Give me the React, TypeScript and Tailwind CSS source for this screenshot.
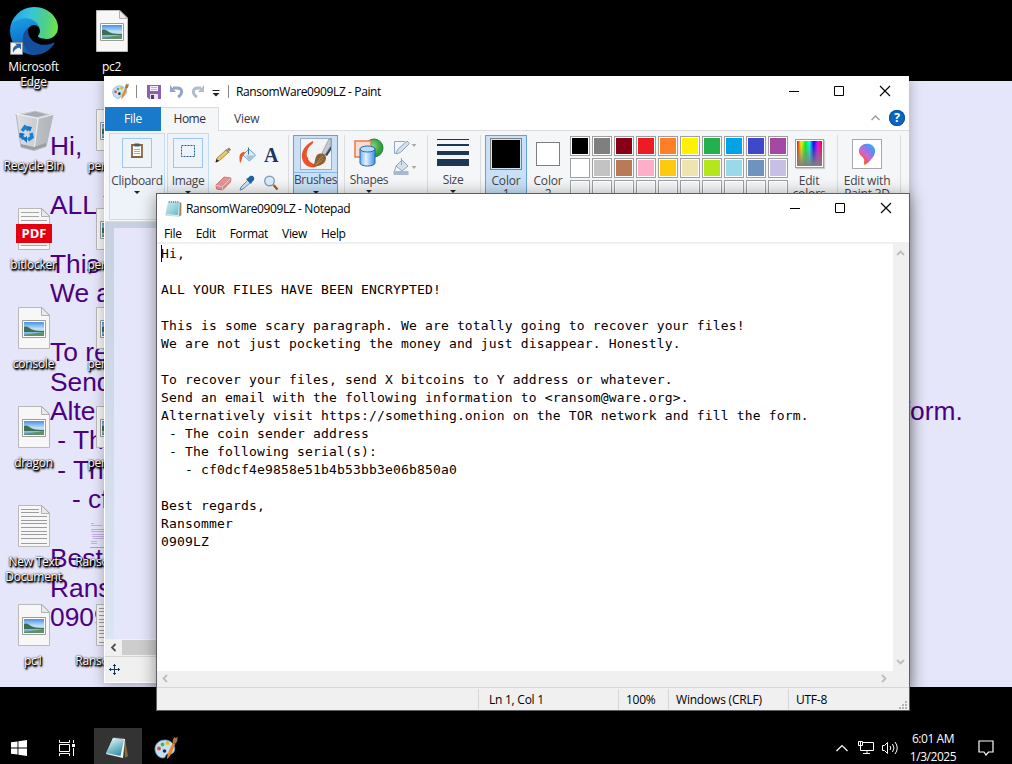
import React from "react";

const note = [
  "Hi,",
  "",
  "ALL YOUR FILES HAVE BEEN ENCRYPTED!",
  "",
  "This is some scary paragraph. We are totally going to recover your files!",
  "We are not just pocketing the money and just disappear. Honestly.",
  "",
  "To recover your files, send X bitcoins to Y address or whatever.",
  "Send an email with the following information to <ransom@ware.org>.",
  "Alternatively visit https://something.onion on the TOR network and fill the form.",
  " - The coin sender address",
  " - The following serial(s):",
  "   - cf0dcf4e9858e51b4b53bb3e06b850a0",
  "",
  "Best regards,",
  "Ransommer",
  "0909LZ",
].join("\n");

/* ---------- Desktop icons ---------- */

function EdgeIcon() {
  return (
    <svg width="48" height="48" viewBox="0 0 256 256">
      <defs>
        <linearGradient id="eTop" x1="0" y1="0.3" x2="1" y2="0.4">
          <stop offset="0" stopColor="#259fe2" />
          <stop offset="0.4" stopColor="#36c3de" />
          <stop offset="0.75" stopColor="#4fcf8a" />
          <stop offset="1" stopColor="#71e24c" />
        </linearGradient>
        <linearGradient id="eLeft" x1="0.3" y1="0" x2="0.5" y2="1">
          <stop offset="0" stopColor="#1ca0e4" />
          <stop offset="0.5" stopColor="#0f7ed4" />
          <stop offset="1" stopColor="#0f59a4" />
        </linearGradient>
      </defs>
      <g transform="translate(-4.63 -4.92)">
        <path d="M235.68 195.46a93.73 93.73 0 0 1-10.54 4.71 101.87 101.87 0 0 1-35.900 6.460c-47.320 0-88.540-32.550-88.540-74.320A31.480 31.480 0 0 1 117.130 105c-42.800 1.800-53.800 46.400-53.800 72.530 0 73.880 68.090 81.370 82.760 81.370 7.910 0 19.840-2.300 27-4.560l1.310-.44a128.340 128.340 0 0 0 66.600-52.800 4 4 0 0 0-5.320-5.640z" fill="#134f9c" />
        <path d="M110.340 246.340A79.200 79.200 0 0 1 87.600 225a80.720 80.720 0 0 1 29.530-120c3.120-1.470 8.450-4.130 15.540-4a32.350 32.350 0 0 1 25.690 13 31.880 31.880 0 0 1 6.360 18.660c0-.21 24.460-79.600-80-79.600-43.900 0-80 41.660-80 78.210a130.150 130.150 0 0 0 12.110 56 128 128 0 0 0 156.380 67.110 75.550 75.550 0 0 1-62.780-8z" fill="url(#eLeft)" />
        <path d="M156.940 153.780c-.81 1.050-3.300 2.500-3.300 5.660 0 2.610 1.700 5.120 4.720 7.230 14.380 10 41.490 8.680 41.560 8.680a59.560 59.560 0 0 0 30.270-8.350 61.380 61.380 0 0 0 30.430-52.880c.26-22.410-8-37.310-11.340-43.910C228.090 28.760 182.350 4.920 132.610 4.920a128 128 0 0 0-128 126.200c.48-36.540 36.800-66.050 80-66.050 3.500 0 23.460.34 42 10.070 16.340 8.580 24.900 18.940 30.850 29.210 6.180 10.670 7.280 24.150 7.280 29.520s-2.740 13.330-7.800 19.910z" fill="url(#eTop)" />
      </g>
      <path d="M3 189h64v64H3z" fill="#f5f5f5" stroke="#8b8b8b" strokeWidth="5" />
      <path d="M17 244c-6-24 4-36 20-40l-10-10h32v32l-10-10c-14 4-24 10-32 28z" fill="#2f62a8" />
    </svg>
  );
}

function RecycleBin() {
  return (
    <svg width="48" height="48" viewBox="0 0 48 48">
      <defs>
        <linearGradient id="bin" x1="0" x2="1">
          <stop offset="0" stopColor="#dfe0e3" />
          <stop offset="0.6" stopColor="#c9cbcf" />
          <stop offset="1" stopColor="#aeb0b6" />
        </linearGradient>
      </defs>
      <path d="M6 8l5 33 13 3.500 12-4 7-32-18-4z" fill="url(#bin)" stroke="#b4b6ba" />
      <path d="M6 8l19-4 18 4.500-15 4z" fill="#c9ccd2" stroke="#f2f3f6" />
      <path d="M13 8.500l12-3 12 3-10 2.500z" fill="#a6aab3" />
      <path d="M28 13l-4 31 12-4 6-30z" fill="#b3b5bb" opacity="0.600" />
      <path d="M28 13l-4 31" stroke="#eeeff2" strokeWidth="1.200" />
      <path d="M11 38l13 3 12-4v3l-12 4-13-3z" fill="#9c9ea0" />
      <g fill="none" stroke="#1783d8" strokeWidth="3.600">
        <path d="M12 25l3-4 4 3" />
        <path d="M21 27l1 4-4 3" />
        <path d="M14 33l-3-3 1-3" />
      </g>
      <path d="M17 20l5 1-2 5zM17 30v7l-4-4zM9 27l6 1-4 4z" fill="#0c72cc" />
    </svg>
  );
}

function Sheet({ kind }: { kind: "picture" | "text" | "pdf" }) {
  const lines = [9, 12, 16, 20, 23, 27, 31, 34, 38];
  return (
    <svg width="48" height="48" viewBox="0 0 48 48">
      <defs>
        <linearGradient id="sky" x1="0" y1="0" x2="0" y2="1">
          <stop offset="0" stopColor="#4a90e6" />
          <stop offset="0.5" stopColor="#c4e4f7" />
          <stop offset="1" stopColor="#5b93c4" />
        </linearGradient>
      </defs>
      <path d="M8.500 3.500H32l7.500 7.500V44.500H8.500z" fill="#f7f7f7" stroke="#b9b9b9" />
      <path d="M31.500 3.500v8h8z" fill="#e9e9e9" stroke="#b0b0b0" />
      {kind === "picture" && (
        <g>
          <path d="M12.500 16.500h23v17h-23z" fill="#fff" stroke="#9b9b9b" />
          <path d="M14 18h20v14H14z" fill="url(#sky)" />
          <path d="M14 23c3-1 4 0 7 2 4 2 8 2 13 2v1H14z" fill="#3d6f57" />
          <path d="M14 31c7-1 12-2 20-3v4H14z" fill="#5f9166" />
        </g>
      )}
      {kind === "text" &&
        lines.map((y, i) => <path key={y} d={i < 2 ? `M11 ${y - 1.5}h18` : `M11 ${y - 1.5}h26`} stroke="#9d9d9d" />)}
      {kind === "text" && <path d="M11 41.500h26" stroke="#9d9d9d" />}
      {kind === "pdf" && (
        <g>
          <path d="M11 7.500h18M11 11.500h18M11 15.500h26M11 40.500h26" stroke="#a5a5a5" />
          <rect x="6" y="19" width="36" height="19" fill="#e3000f" />
          <text x="24" y="33" textAnchor="middle" fontSize="13" fontWeight="700" fill="#fff" className="font-['Open_Sans',sans-serif]">
            PDF
          </text>
        </g>
      )}
    </svg>
  );
}

function Thumb() {
  return (
    <svg width="48" height="48" viewBox="0 0 48 48">
      <path d="M2 20h44v25H2z" fill="#e6e6fa" />
      <path d="M3 21.500h3M3 23.500h11M3 27.500h28M3 29.500h26M4 32.500h25M4 34.500h20M5 36.500h20M3 39.500h6M3 41.500h6" stroke="#c3b0e0" />
      <path d="M2 45.500h44" stroke="#a8a8b8" />
    </svg>
  );
}

function DeskItem({ icon, label }: { icon: React.ReactNode; label: string }) {
  return (
    <div className="flex h-[99px] w-[78px] flex-col items-center">
      {icon}
      <div className="mr-px mt-[4px] w-[76px] whitespace-pre text-center text-[12px] leading-[15px] tracking-[-0.25px] text-white [text-shadow:1px_1px_1px_#000,1px_1px_2px_#000,1px_2px_2px_#000,0_0_2px_#000]">
        {label}
      </div>
    </div>
  );
}

/* ---------- Small shared drawings ---------- */

function WindowButtons() {
  return (
    <svg width="105" height="12" viewBox="0 0 105 12" fill="none" stroke="#000" className="shrink-0">
      <path d="M0 6.500h10" />
      <path d="M45.500 1.500h9v9h-9z" />
      <path d="M91 1l10 10M101 1L91 11" strokeWidth="1.100" />
    </svg>
  );
}

function Palette({ size }: { size: number }) {
  return (
    <svg width={size} height={size} viewBox="0 0 24 24">
      <path d="M11 4C5 4 1 8 1 13c0 5 4 9 8 9 3 0 2-3 4-4 2-1 3 1 6-1 5-5-1-13-8-13z" fill="#c3e1f4" stroke="#6ba0c4" strokeWidth="0.800" />
      <circle cx="5" cy="12.500" r="1.900" fill="#e44b3c" />
      <circle cx="8.500" cy="8.500" r="1.900" fill="#4cb24a" />
      <circle cx="13.500" cy="7" r="2" fill="#f3b01d" />
      <circle cx="10.500" cy="15" r="1.800" fill="#1f2b38" />
      <path d="M13 23c0-5 3-11 6-16l2 1c-2 6-4 12-8 15z" fill="#e98527" />
      <path d="M18.500 7c0-3 1-5 2-6l1 1 2-1c0 3 0 5-2.500 7z" fill="#a87545" />
    </svg>
  );
}

function PadIcon({ size }: { size: number }) {
  return (
    <svg width={size} height={size} viewBox="0 0 24 24">
      <defs>
        <linearGradient id="pad" x1="0" y1="0" x2="1" y2="1">
          <stop offset="0" stopColor="#c9e9ef" />
          <stop offset="0.500" stopColor="#9bd6e0" />
          <stop offset="1" stopColor="#66b4c4" />
        </linearGradient>
      </defs>
      <path d="M20 3l3 1v18l-4 1z" fill="#9c8458" />
      <path d="M5 3h16l-1 20-19-1.500z" fill="#f4f6f6" stroke="#7fa6ae" strokeWidth="0.600" />
      <path d="M5 3.500h15L18.500 21 1 20z" fill="url(#pad)" />
      <path d="M6 1.500v2.500M9 1.500v2.500M12 1.500v2.500M15 1.500v2.500M18 1.500v2.500" stroke="#555" />
    </svg>
  );
}

function TaskPad() {
  return (
    <svg width="24" height="24" viewBox="0 0 24 24">
      <defs>
        <linearGradient id="tpad" x1="0.300" y1="0" x2="0.800" y2="1">
          <stop offset="0" stopColor="#e4f3f5" />
          <stop offset="0.500" stopColor="#7dbfcc" />
          <stop offset="1" stopColor="#2f8ba0" />
        </linearGradient>
      </defs>
      <path d="M19 3l1 .5L23 20l-3 2z" fill="#8a6b35" />
      <path d="M8 2l12 1-2 19L1 18z" fill="#eef3f3" />
      <path d="M8 2l11 1.500L15.500 20 1 17z" fill="url(#tpad)" />
      <path d="M8.500 1.500l10.500 1" stroke="#777" strokeDasharray="1 1" />
    </svg>
  );
}

function Down() {
  return (
    <svg width="6" height="3" viewBox="0 0 6 3">
      <path d="M0 0h6L3 3z" fill="#222" />
    </svg>
  );
}

function Sep() {
  return <div className="mt-[2px] h-[84px] w-px shrink-0 bg-[#dcdddf]" />;
}

/* ---------- Paint ---------- */

function ToolIcons() {
  return (
    <div className="ml-[2px] mt-[8px] grid h-[56px] w-[72px] shrink-0 grid-cols-3 grid-rows-2 place-items-center">
      <svg width="16" height="16" viewBox="0 0 16 16">
        <path d="M1 15l1-4 9-8 2.500 2.500-9 8z" fill="#edc867" stroke="#8d6b22" strokeWidth="0.700" />
        <path d="M12.500 2l1.500-1 1.500 1.500-1 1.500z" fill="#d6606a" stroke="#a84650" strokeWidth="0.600" />
        <path d="M11 2.500l3 3" stroke="#5d9a68" strokeWidth="1.500" />
        <path d="M0.500 15.500L1.500 12l2.500 2z" fill="#222" />
      </svg>
      <svg width="17" height="17" viewBox="0 0 17 17">
        <path d="M4 8l6-6 6.500 6-6 6z" fill="#dcebf7" stroke="#6a99c2" />
        <path d="M7 8.500h8.500l-5 5z" fill="#9cc4e2" />
        <path d="M9.500 0.500v7" stroke="#3c6f9e" />
        <path d="M6 5C1 5 -0.500 8 1 16c2-1 1.500-6 4-9z" fill="#ea5a2d" />
      </svg>
      <span className="font-['Liberation_Serif',serif] text-[20px] font-bold leading-none text-[#1d3557]">A</span>
      <svg width="17" height="15" viewBox="0 0 17 15">
        <path d="M1 9l8-8 7 1-.5 4-8 8L1.500 13z" fill="#e99393" stroke="#b96060" strokeWidth="0.700" />
        <path d="M1 9.500l6.500 1 8-8M7.500 10.500V14" fill="none" stroke="#f8cccc" />
      </svg>
      <svg width="16" height="16" viewBox="0 0 16 16">
        <path d="M8.500 5.500L2 12l-1 3 3-1 7-6z" fill="#cce6f5" stroke="#3f7fae" strokeWidth="0.800" />
        <path d="M7 4l5 5 1-2 2-2c1-3-1-5-4-4L9 3z" fill="#1e61a5" />
      </svg>
      <svg width="16" height="16" viewBox="0 0 16 16">
        <circle cx="6.500" cy="6" r="4.800" fill="#dcedfa" stroke="#8b9fb4" strokeWidth="1.400" />
        <path d="M10.500 10l4 4.500" stroke="#9a6538" strokeWidth="2.500" />
      </svg>
    </div>
  );
}

function BrushIcon() {
  return (
    <svg width="32" height="32" viewBox="0 0 32 32" className="shrink-0">
      <rect x="0.500" y="0.500" width="31" height="31" fill="#f2f3f5" stroke="#9caec0" />
      <path d="M13 3C5 7 1 13 2 20c1 5 4 8 8 9 4 1 7 0 9-3-5 1-9-1-11-5 1-1 0-2-1-2-1-5 1-9 3-11 2-2 4-3 3-5z" fill="#e6552c" />
      <path d="M22 15l7-14h2v6l-6 10z" fill="#c3cad2" stroke="#7d8792" strokeWidth="0.600" />
      <path d="M25 17l6-9v4l-4 6z" fill="#3c475b" />
      <path d="M12 28c4-2 2-7 5-11 4-3 9-1 9 3 0 6-7 9-14 8z" fill="#8d6136" />
      <path d="M17 26c2-4 3-6 6-8M15 27c3-1 6-4 8-6" fill="none" stroke="#b98c55" />
    </svg>
  );
}

function ShapesIcon() {
  return (
    <svg width="30" height="29" viewBox="0 0 30 29">
      <defs>
        <linearGradient id="cyl" x1="0" x2="1">
          <stop offset="0" stopColor="#6cb1ec" />
          <stop offset="0.400" stopColor="#e4f3ff" />
          <stop offset="1" stopColor="#3d8fdf" />
        </linearGradient>
        <radialGradient id="ball" cx="0.400" cy="0.400">
          <stop offset="0" stopColor="#8bd67e" />
          <stop offset="1" stopColor="#2f9e3a" />
        </radialGradient>
      </defs>
      <circle cx="20" cy="10" r="9" fill="url(#ball)" stroke="#228332" />
      <path d="M1 3h16v16H1z" fill="#fbdccd" stroke="#ea7a4a" strokeWidth="1.500" />
      <path d="M6 11v14c0 4 15 4 15 0V11z" fill="url(#cyl)" stroke="#2268b2" />
      <ellipse cx="13.500" cy="11" rx="7.500" ry="3" fill="#b8dcf9" stroke="#2268b2" />
    </svg>
  );
}

const colors = [
  ["bg-black", "bg-[#7f7f7f]", "bg-[#880015]", "bg-[#ed1c24]", "bg-[#ff7f27]", "bg-[#fff200]", "bg-[#22b14c]", "bg-[#00a2e8]", "bg-[#3f48cc]", "bg-[#a349a4]"],
  ["bg-white", "bg-[#c3c3c3]", "bg-[#b97a57]", "bg-[#ffaec9]", "bg-[#ffc90e]", "bg-[#efe4b0]", "bg-[#b5e61d]", "bg-[#99d9ea]", "bg-[#7092be]", "bg-[#c8bfe7]"],
  Array(10).fill("bg-[#f5f6f7]"),
].flat();

function Paint() {
  return (
    <div className="absolute left-[104px] top-[76px] flex h-[607px] w-[805px] flex-col bg-white pl-px shadow-[0_2px_12px_rgba(0,0,0,0.3)]">
      <div className="flex h-[31px] shrink-0 items-center pl-[7px]">
        <Palette size={17} />
        <div className="ml-[7px] h-[13px] w-px bg-[#888]" />
        <svg width="14" height="14" viewBox="0 0 14 14" className="ml-[10px]">
          <path d="M0 0h14v14H2l-2-2z" fill="#8b62b0" />
          <path d="M3 1h8v5H3z" fill="#f4effa" />
          <path d="M3 9h8v5H3z" fill="#e7e2ee" />
          <path d="M4 10h3v4H4z" fill="#563477" />
          <path d="M4 2.500h6M4 4.500h6" stroke="#c3afd7" />
        </svg>
        <svg width="36" height="15" viewBox="0 0 36 15" className="ml-[9px]" fill="none" stroke="#93a5c8" strokeWidth="3">
          <path d="M3 4h4c6 0 6 6 1 9" />
          <path d="M0 1v7h6z" fill="#93a5c8" stroke="none" />
          <path d="M31 4h-3c-6 0-6 6-1 9" stroke="#b2bccd" />
          <path d="M34 1v7h-6z" fill="#b2bccd" stroke="none" />
        </svg>
        <svg width="8" height="7" viewBox="0 0 8 7" className="ml-[6px] mt-[3px]">
          <path d="M0.500 0.500h7" stroke="#222" />
          <path d="M0.500 3h7L4 6.500z" fill="#222" />
        </svg>
        <div className="ml-[8px] h-[13px] w-px bg-[#888]" />
        <div className="ml-[7px] text-[12px] tracking-[-0.380px]">RansomWare0909LZ - Paint</div>
        <div className="mb-px ml-auto mr-[15px] flex">
          <WindowButtons />
        </div>
      </div>

      <div className="flex h-[24px] shrink-0 text-[12px] leading-[24px] tracking-[-0.2px]">
        <div className="w-[56px] bg-[#1979ca] text-center text-white">File</div>
        <div className="w-[58px] border-r border-t border-[#dadbdc] bg-[#f5f6f7] text-center text-[#2b2b3b] leading-[22px] tracking-[-0.500px]">Home</div>
        <div className="flex grow items-center border-b border-[#dadbdc] pl-[15px]">
          <span className="text-[#3b3b4b]">View</span>
          <svg width="9" height="6" viewBox="0 0 9 6" className="ml-auto mr-[9px] mb-[2px]" fill="none" stroke="#9a9a9a" strokeWidth="1.400">
            <path d="M0.500 5l4-4 4 4" />
          </svg>
          <div className="mb-[2px] mr-[4px] flex size-[16px] items-center justify-center rounded-full bg-[#0a66c2] text-[12px] font-bold text-white ring-1 ring-inset ring-[#0c5398]">?</div>
        </div>
      </div>

      <div className="flex h-[91px] shrink-0 items-start overflow-hidden border-b border-[#d5dbe2] bg-[#f5f6f7] pl-[4px] pt-[2px] text-[12px] leading-[14px] tracking-[-0.350px] text-[#44444f]">
        <div className="flex h-[87px] w-[56px] shrink-0 flex-col items-center border border-[#c3dcf2] bg-[#edf3f8] pt-[4px]">
          <div className="flex size-[30px] shrink-0 items-center justify-center border border-[#9dc8f2]">
            <svg width="12" height="15" viewBox="0 0 12 15" className="mb-[5px]">
              <path d="M1 2h10v12H1z" fill="#fff" stroke="#8a6440" strokeWidth="1.800" />
              <path d="M3.500 0.500h5v3h-5z" fill="#555" />
              <path d="M3 6.500h6M3 8.500h6M3 10.500h6" stroke="#aaa" />
            </svg>
          </div>
          <span className="mt-[6px]">Clipboard</span>
          <span className="mt-[3px] flex"><Down /></span>
        </div>
        <div className="ml-[2px] flex h-[87px] w-[42px] shrink-0 flex-col items-center border border-[#c3dcf2] bg-[#edf3f8] pt-[4px]">
          <div className="flex size-[30px] shrink-0 items-center justify-center border border-[#9dc8f2]">
            <svg width="14" height="12" viewBox="0 0 14 12" className="mb-[4px]">
              <path d="M0.500 0.500h13v11H0.500z" fill="none" stroke="#215c92" strokeDasharray="2 1" />
            </svg>
          </div>
          <span className="mt-[6px]">Image</span>
          <span className="mt-[3px] flex"><Down /></span>
        </div>
        <ToolIcons />
        <div className="ml-[5px]"><Sep /></div>
        <div className="ml-[4px] mt-[2px] flex h-[83px] w-[45px] shrink-0 flex-col items-center border border-[#62a2e4] bg-[#c9e0f7] pt-[2px]">
          <BrushIcon />
          <div className="mt-[2px] h-px w-full shrink-0 bg-[#86b8ea]" />
          <span>Brushes</span>
          <span className="mt-[4px] flex"><Down /></span>
        </div>
        <div className="ml-[6px]"><Sep /></div>
        <div className="ml-[5px] flex w-[38px] shrink-0 flex-col items-center pt-[5px]">
          <ShapesIcon />
          <span className="mt-[6px]">Shapes</span>
          <span className="mt-[3px] flex"><Down /></span>
        </div>
        <svg width="25" height="36" viewBox="0 0 25 36" className="ml-[5px] mt-[7px] shrink-0">
          <path d="M12 1.500H1.500v12l3-1" fill="none" stroke="#8ea5c4" />
          <path d="M3 14l1.500-4.500L14 1l2.500 2.500-9 9z" fill="#d5dfea" stroke="#8fa4bd" />
          <path d="M18.500 4h5L21 7zM18.500 26h5L21 29z" fill="#aaa" />
          <path d="M3 26l6-6 6 6-6 5z" fill="#d5dfea" stroke="#8fa4bd" />
          <path d="M8.500 18v7M3.500 25l-2 6" stroke="#8fa4bd" />
          <path d="M0.500 31h15v4h-15z" fill="#a9b9ce" />
        </svg>
        <div className="ml-[9px]"><Sep /></div>
        <div className="ml-[9px] flex w-[32px] shrink-0 flex-col items-center pt-[6px]">
          <div className="h-px w-full bg-[#1c3658]" />
          <div className="mt-[4px] h-[2px] w-full bg-[#1c3658]" />
          <div className="mt-[5px] h-[4px] w-full bg-[#1c3658]" />
          <div className="mt-[4px] h-[7px] w-full bg-[#1c3658]" />
          <span className="mt-[7px]">Size</span>
          <span className="mt-[3px] flex"><Down /></span>
        </div>
        <div className="ml-[11px]"><Sep /></div>
        <div className="ml-[4px] mt-[2px] flex h-[83px] w-[42px] shrink-0 flex-col items-center border border-[#62a2e4] bg-[#c9e0f7] pt-[2px] text-center">
          <div className="size-[32px] shrink-0 border border-[#808080] bg-black shadow-[inset_0_0_0_1px_#cfe3f6]" />
          <span className="mt-[4px] leading-[13px] tracking-[-0.150px]">Color<br />1</span>
        </div>
        <div className="ml-[2px] flex w-[38px] shrink-0 flex-col items-center pt-[9px] text-center">
          <div className="size-[24px] border border-[#808080] bg-white" />
          <span className="mt-[8px] leading-[13px] tracking-[-0.150px]">Color<br />2</span>
        </div>
        <div className="ml-[3px] mt-[3px] grid shrink-0 grid-cols-10 gap-[2px]">
          {colors.map((c, i) => (
            <div key={i} className="size-[20px] border border-[#a0a0a0] bg-white p-px">
              <div className={`size-full ${c}`} />
            </div>
          ))}
        </div>
        <div className="ml-px flex w-[40px] shrink-0 flex-col items-center pt-[6px] text-center">
          <div className="size-[29px] border border-[#a0a0a0] bg-white p-px shadow-[1px_1px_1px_#ccc]">
            <div className="size-full bg-[linear-gradient(to_bottom,transparent,#808080),linear-gradient(to_right,#f00,#ff0,#0f0,#0ff,#00f,#f0f,#f00)]" />
          </div>
          <span className="mt-[6px] leading-[13px] tracking-[-0.150px]">Edit<br />colors</span>
        </div>
        <div className="ml-[8px]"><Sep /></div>
        <div className="ml-[4px] flex w-[50px] shrink-0 flex-col items-center pt-[6px] text-center">
          <div className="flex size-[30px] items-center justify-center border border-[#a8a8a8] bg-white">
            <svg width="18" height="25" viewBox="0 0 20 26">
              <defs>
                <linearGradient id="p3" x1="1" y1="0" x2="0.200" y2="1">
                  <stop offset="0" stopColor="#18d0f0" />
                  <stop offset="0.350" stopColor="#6c7ff0" />
                  <stop offset="0.600" stopColor="#d565cf" />
                  <stop offset="0.800" stopColor="#ef5350" />
                  <stop offset="1" stopColor="#ffb900" />
                </linearGradient>
              </defs>
              <path d="M10 1c-5 0-9 4-9 8 0 5 5 6 6 10 0 2-1 3 0 6 6-4 12-10 12-16 0-5-4-8-9-8z" fill="url(#p3)" />
              <path d="M5 5c5-2 9 2 9 8" fill="none" stroke="#8f8cf4" strokeWidth="1.500" opacity="0.500" />
            </svg>
          </div>
          <span className="mt-[5px] whitespace-nowrap leading-[13px] tracking-[-0.200px]">Edit with<br />Paint 3D</span>
        </div>
        <div className="ml-[8px]"><Sep /></div>
      </div>

      <div className="min-h-0 grow bg-gradient-to-b from-[#c6d0df] to-[#dce6f3] pl-[9px] pt-[6px]">
        <div className="size-full bg-[#e6e6fa]" />
      </div>
      <div className="flex h-[17px] shrink-0 bg-[#f0f0f0]">
        <svg width="17" height="17" viewBox="0 0 17 17" fill="none" stroke="#505050" strokeWidth="1.800">
          <path d="M10.500 5L7 8.500l3.500 3.500" />
        </svg>
        <div className="my-px grow bg-[#cdcdcd]" />
      </div>
      <div className="h-[26px] shrink-0 border-t border-[#d5d5d5] bg-[#f0f0f0] pl-[4px] pt-[7px]">
        <svg width="11" height="11" viewBox="0 0 11 11" fill="none" stroke="#1c3658">
          <path d="M5.500 0v11M0 5.500h11M4 1.500h3M4 9.500h3M1.500 4v3M9.500 4v3" />
        </svg>
      </div>
      <div className="h-px shrink-0 bg-white" />
    </div>
  );
}

/* ---------- Notepad ---------- */

function Notepad() {
  return (
    <div className="absolute left-[156px] top-[193px] flex h-[518px] w-[754px] flex-col border border-[#5d5d62] bg-white shadow-[0_3px_16px_rgba(0,0,0,0.42)]">
      <div className="flex h-[29px] shrink-0 items-center pl-[8px]">
        <PadIcon size={17} />
        <div className="ml-[4px] text-[12px] tracking-[-0.380px]">RansomWare0909LZ - Notepad</div>
        <div className="mb-[2px] ml-auto mr-[14px] flex">
          <WindowButtons />
        </div>
      </div>
      <div className="flex h-[21px] shrink-0 items-center gap-[14px] border-b-2 border-[#f0f0f0] pl-[7px] pt-[2px] text-[12px] tracking-[-0.330px]">
        <span>File</span>
        <span>Edit</span>
        <span>Format</span>
        <span>View</span>
        <span>Help</span>
      </div>
      <div className="flex min-h-0 grow">
        <div className="relative grow overflow-hidden pl-[4px] pt-px">
          <pre className="font-['DejaVu_Sans_Mono',monospace] text-[13px] leading-[18px] tracking-[0.170px] text-black">{note}</pre>
          <div className="absolute left-[4px] top-px h-[17px] w-px bg-black" />
        </div>
        <div className="flex w-[16px] shrink-0 flex-col items-center justify-between bg-[#f0f0f0] py-[6px] pr-px">
          <svg width="9" height="6" viewBox="0 0 9 6" fill="none" stroke="#bdbdbd" strokeWidth="1.800">
            <path d="M1 5l3.500-3.500L8 5" />
          </svg>
          <svg width="9" height="6" viewBox="0 0 9 6" fill="none" stroke="#bdbdbd" strokeWidth="1.800">
            <path d="M1 1l3.500 3.500L8 1" />
          </svg>
        </div>
      </div>
      <div className="flex h-[16px] shrink-0 items-center justify-between bg-[#f0f0f0] pb-px pl-[5px] pr-[22px]">
        <svg width="6" height="9" viewBox="0 0 6 9" fill="none" stroke="#bdbdbd" strokeWidth="1.800">
          <path d="M5 1L1.500 4.500 5 8" />
        </svg>
        <svg width="6" height="9" viewBox="0 0 6 9" fill="none" stroke="#bdbdbd" strokeWidth="1.800">
          <path d="M1 1l3.500 3.500L1 8" />
        </svg>
      </div>
      <div className="flex h-[23px] shrink-0 border-t border-[#d7d7d7] bg-[#f0f0f0] pt-px text-[12px] leading-[22px] tracking-[-0.25px]">
        <div className="w-[321px]" />
        <div className="w-[140px] border-l border-[#d7d7d7] pl-[10px]">Ln 1, Col 1</div>
        <div className="w-[50px] border-l border-[#d7d7d7] pl-[7px]">100%</div>
        <div className="w-[120px] border-l border-[#d7d7d7] pl-[7px] tracking-[-0.200px]">Windows (CRLF)</div>
        <div className="flex grow border-l border-[#d7d7d7] pl-[7px]">
          UTF-8
          <svg width="8" height="8" viewBox="0 0 8 8" className="ml-auto mr-[2px] mt-[12px]" fill="#b5b5b5">
            <path d="M6 0h2v2H6zM3 3h2v2H3zM6 3h2v2H6zM0 6h2v2H0zM3 6h2v2H3zM6 6h2v2H6z" />
          </svg>
        </div>
      </div>
    </div>
  );
}

/* ---------- Taskbar ---------- */

function Taskbar() {
  return (
    <div className="absolute bottom-0 left-0 flex h-[36px] w-full items-center bg-black text-white">
      <svg width="16" height="16" viewBox="0 0 16 16" fill="#fff" className="ml-[11px] mt-[3px]">
        <path d="M0 2.300l6.500-.9v6.100H0zM7.400 1.300L16 0v7.500H7.400zM0 8.500h6.500v6.100L0 13.700zM7.400 8.500H16V16l-8.600-1.200z" />
      </svg>
      <svg width="17" height="16" viewBox="0 0 17 16" fill="none" stroke="#fff" className="ml-[32px] mt-[3px]">
        <path d="M0.500 0v2.500h10V0M0.500 4.500h10v7H0.500zM0.500 16v-2.500h10V16M14.500 0v3M14.500 8v8" />
        <path d="M13 4h3v3h-3z" fill="#fff" stroke="none" />
      </svg>
      <div className="ml-[18px] flex h-full w-[48px] items-center justify-center bg-[#333] pt-[3px] pr-[2px]">
        <TaskPad />
      </div>
      <div className="ml-[12px] mt-[3px] flex">
        <Palette size={24} />
      </div>
      <svg width="12" height="8" viewBox="0 0 12 8" fill="none" stroke="#fff" strokeWidth="1.200" className="ml-auto mt-[3px]">
        <path d="M0.500 7L6 1.500 11.500 7" />
      </svg>
      <svg width="16" height="14" viewBox="0 0 16 14" fill="none" stroke="#fff" className="ml-[10px] mt-[4px]">
        <path d="M5 1.500h10.500v8h-13V5M9 10v3M5 12.500h7" />
        <path d="M0.500 0.500h4v4h-4z" fill="#000" />
        <path d="M2.500 1v3" />
      </svg>
      <svg width="17" height="14" viewBox="0 0 17 14" fill="none" stroke="#fff" className="ml-[8px] mt-[3px]">
        <path d="M0.500 4.500h2l3-3v11l-3-3h-2z" />
        <path d="M8 5q1.500 2 0 4M10.500 3q3 4 0 8M13 1q4.500 6 0 12" />
      </svg>
      <div className="ml-[10px] mr-px w-[48px] whitespace-nowrap pt-[3px] text-center text-[12px] leading-[18px] tracking-[-0.450px]">
        6:01 AM
        <br />
        1/3/2025
      </div>
      <svg width="16" height="16" viewBox="0 0 16 16" fill="none" stroke="#fff" strokeWidth="1.200" className="ml-[20px] mr-[18px] mt-[3px]">
        <path d="M1 1h14v11h-4.500L8 15l-2-3H1z" />
      </svg>
    </div>
  );
}

export default function App() {
  return (
    <div className="relative h-[764px] w-[1012px] overflow-hidden bg-black pt-[81px] font-['Open_Sans',sans-serif] text-black">
      <div className="h-[606px] overflow-hidden bg-[#e6e6fa] pl-[50px] pt-[51px]">
        <pre className="font-['Liberation_Sans',sans-serif] text-[26.350px] leading-[29.430px] text-[#4b0082]">{note}</pre>
      </div>
      <div className="absolute left-[-5px] top-[7px] flex">
        <div>
          <DeskItem icon={<EdgeIcon />} label={"Microsoft\nEdge"} />
          <DeskItem icon={<RecycleBin />} label="Recycle Bin" />
          <DeskItem icon={<Sheet kind="pdf" />} label="bitlocker" />
          <DeskItem icon={<Sheet kind="picture" />} label="console" />
          <DeskItem icon={<Sheet kind="picture" />} label="dragon" />
          <DeskItem icon={<Sheet kind="text" />} label={"New Text\nDocument"} />
          <DeskItem icon={<Sheet kind="picture" />} label="pc1" />
        </div>
        <div>
          <DeskItem icon={<Sheet kind="picture" />} label="pc2" />
          <DeskItem icon={<Sheet kind="picture" />} label="person-1" />
          <DeskItem icon={<Sheet kind="picture" />} label="person-2" />
          <DeskItem icon={<Sheet kind="picture" />} label="person-3" />
          <DeskItem icon={<Sheet kind="picture" />} label="person-4" />
          <DeskItem icon={<Thumb />} label="RansomWare" />
          <DeskItem icon={<Sheet kind="text" />} label="RansomWare" />
        </div>
      </div>
      <Paint />
      <Notepad />
      <Taskbar />
    </div>
  );
}
